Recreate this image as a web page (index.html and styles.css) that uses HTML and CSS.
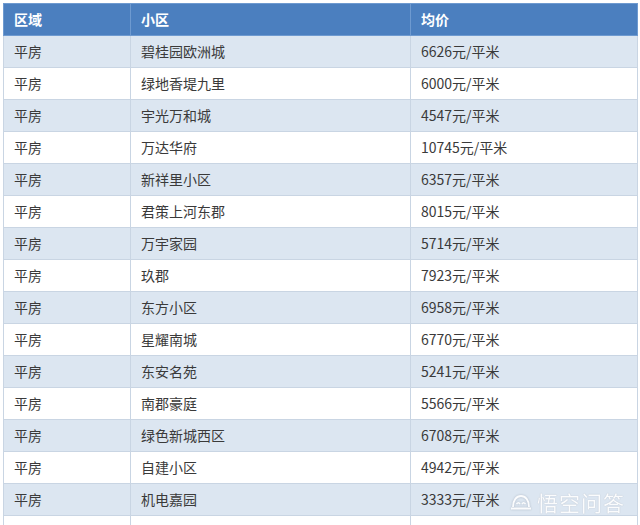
FILE: index.html
```html
<!DOCTYPE html>
<html lang="zh">
<head>
<meta charset="utf-8">
<link rel="stylesheet" href="styles.css">
</head>
<body>
<div class="wrap">
<table class="tbl">
<colgroup><col class="c1"><col class="c2"><col class="c3"></colgroup>
<thead><tr><th>区域</th><th>小区</th><th>均价</th></tr></thead>
<tbody>
<tr><td>平房</td><td>碧桂园欧洲城</td><td>6626元/平米</td></tr>
<tr><td>平房</td><td>绿地香堤九里</td><td>6000元/平米</td></tr>
<tr><td>平房</td><td>宇光万和城</td><td>4547元/平米</td></tr>
<tr><td>平房</td><td>万达华府</td><td>10745元/平米</td></tr>
<tr><td>平房</td><td>新祥里小区</td><td>6357元/平米</td></tr>
<tr><td>平房</td><td>君策上河东郡</td><td>8015元/平米</td></tr>
<tr><td>平房</td><td>万宇家园</td><td>5714元/平米</td></tr>
<tr><td>平房</td><td>玖郡</td><td>7923元/平米</td></tr>
<tr><td>平房</td><td>东方小区</td><td>6958元/平米</td></tr>
<tr><td>平房</td><td>星耀南城</td><td>6770元/平米</td></tr>
<tr><td>平房</td><td>东安名苑</td><td>5241元/平米</td></tr>
<tr><td>平房</td><td>南郡豪庭</td><td>5566元/平米</td></tr>
<tr><td>平房</td><td>绿色新城西区</td><td>6708元/平米</td></tr>
<tr><td>平房</td><td>自建小区</td><td>4942元/平米</td></tr>
<tr><td>平房</td><td>机电嘉园</td><td>3333元/平米</td></tr>
<tr><td>&nbsp;</td><td>&nbsp;</td><td>&nbsp;</td></tr>
</tbody>
</table>
<div class="mark">
<svg class="logo" width="22" height="17" viewBox="0 0 22 17"><path d="M3 13 C3 6 6.5 2 11 2 C15.5 2 19 6 19 13" fill="none" stroke="#fff" stroke-width="1.8"/><path d="M6.5 10 Q8.5 7.5 10 10" fill="none" stroke="#fff" stroke-width="1.6"/><path d="M12 10 Q13.5 7.5 15.5 10" fill="none" stroke="#fff" stroke-width="1.6"/><path d="M1 14.5 H21" stroke="#fff" stroke-width="2"/></svg>
<span class="mtext">悟空问答</span>
</div>
</div>
</body>
</html>
```
FILE: styles.css
```css
html, body { margin: 0; padding: 0; background: #fff; }
body { width: 640px; height: 525px; overflow: hidden; font-family: "Noto Sans CJK SC", "Liberation Sans", sans-serif; }
.wrap { position: relative; padding: 3px 0 0 3px; }
.tbl { border-collapse: collapse; table-layout: fixed; width: 634px; font-size: 14px; color: #3a3a3a; }
.c1 { width: 127px; }
.c2 { width: 280px; }
.c3 { width: 227px; }
.tbl th, .tbl td { height: 31px; padding: 0 0 0 10px; text-align: left; border: 1px solid #c9d5e3; line-height: 31px; white-space: nowrap; }
.tbl th { background: #4b7fbf; color: #fff; font-weight: bold; border-color: #6e9ad0; }
.tbl tbody tr:nth-child(odd) td { background: #dce6f1; }
.tbl tbody tr:nth-child(even) td { background: #fff; }
.mark { position: absolute; left: 510px; top: 490px; display: flex; align-items: center; gap: 5px; white-space: nowrap; opacity: 0.9; }
.logo { display: block; filter: drop-shadow(0 0 1px rgba(120,130,150,0.5)); }
.mtext { color: #fff; font-size: 21px; line-height: 24px; letter-spacing: 1px; text-shadow: 0 0 1px rgba(120,130,150,0.6); }
```
